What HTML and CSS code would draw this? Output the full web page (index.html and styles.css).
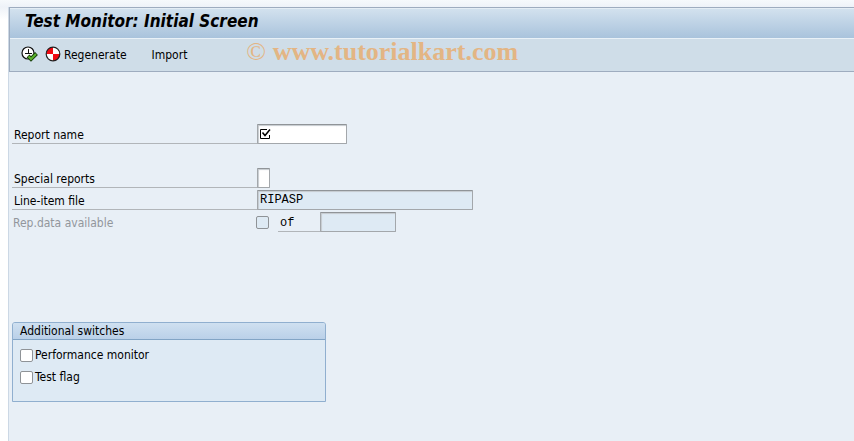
FILE: index.html
```html
<!DOCTYPE html>
<html lang="en">
<head>
<meta charset="utf-8">
<title>Test Monitor: Initial Screen</title>
<link rel="stylesheet" href="styles.css">
</head>
<body>
<main class="window">
  <header class="header">
    <h1 class="title">Test Monitor: Initial Screen</h1>
    <div class="toolbar">
      <button class="tool" type="button" aria-label="Execute">
        <svg width="17" height="17" viewBox="0 0 17 17">
          <circle cx="7" cy="7" r="6" fill="#fff" stroke="#111" stroke-width="1.2"/>
          <path d="M7.500 3v5M4 7.500h7" stroke="#111" fill="none"/>
          <path d="M7 10l3 3 5.500-5.500" stroke="#173d0c" stroke-width="4" fill="none"/>
          <path d="M7.500 10.500l2.500 2.500 5-5" stroke="#5cb52c" stroke-width="2" fill="none"/>
        </svg>
      </button>
      <button class="tool regenerate" type="button">
        <svg width="16" height="16" viewBox="0 0 16 16">
          <circle cx="8" cy="8" r="7" fill="#fff"/>
          <path d="M8 8V1A7 7 0 0 0 1 8zM8 8v7a7 7 0 0 0 7-7z" fill="#f00a12"/>
          <circle cx="8" cy="8" r="6.800" fill="none" stroke="#222" stroke-width="1.200"/>
        </svg>
        <span>Regenerate</span>
      </button>
      <button class="tool import" type="button">Import</button>
      <span class="watermark"><span class="copy">©</span> www.tutorialkart.com</span>
    </div>
  </header>

  <form class="content">
    <div class="row spaced">
      <label class="label" for="report">Report name</label>
      <span class="required">
        <input class="field report" id="report" type="text">
        <svg class="mark" width="12" height="12" viewBox="0 0 12 12" fill="none" stroke="#000">
          <path d="M8 1.500H1.500v9h9V7"/>
          <path d="M3.500 4.500l2.500 3 5-6" stroke-width="1.500"/>
        </svg>
      </span>
    </div>
    <div class="row">
      <label class="label" for="special">Special reports</label>
      <input class="field special" id="special" type="text">
    </div>
    <div class="row">
      <label class="label" for="file">Line-item file</label>
      <input class="field file" id="file" type="text" value="RIPASP" readonly>
    </div>
    <div class="row">
      <label class="label muted" for="available">Rep.data available</label>
      <input class="check" id="available" type="checkbox" disabled>
      <label class="of" for="total">of</label>
      <input class="field total" id="total" type="text" readonly>
    </div>

    <fieldset class="group">
      <legend class="legend">Additional switches</legend>
      <div class="option"><input class="check" id="perf" type="checkbox"><label for="perf">Performance monitor</label></div>
      <div class="option"><input class="check" id="flag" type="checkbox"><label for="flag">Test flag</label></div>
    </fieldset>
  </form>
</main>
</body>
</html>
```
FILE: styles.css
```css
* {
  box-sizing: border-box;
}

body {
  margin: 0;
  min-height: 100vh;
  padding: 7px 0 0 8px;
  display: flex;
  background: linear-gradient(#f6f9fc, #eef2f8 7px, #fff 20px);
  color: #000;
  font-family: Tahoma, "DejaVu Sans Condensed", "DejaVu Sans", sans-serif;
  font-size: 12px;
  line-height: 16px;
}

.window {
  flex: 1;
  border-left: 1px solid #ccd8e5;
  background: #e8eff6;
}

.header {
  border: 1px solid #9eacbf;
  border-right: 0;
  background: #cfdde8;
}

.title {
  margin: 0;
  height: 31px;
  padding: 0 15px;
  border-top: 1px solid #e4edf5;
  border-bottom: 1px solid #e9f1f7;
  background: linear-gradient(#d2e1ee, #a9c3dc);
  font-size: 17px;
  font-style: italic;
  font-weight: bold;
  line-height: 25px;
}

.toolbar {
  display: flex;
  align-items: center;
  height: 32px;
  padding: 0 11px;
}

.tool {
  display: flex;
  align-items: center;
  gap: 3px;
  padding: 0;
  border: 0;
  background: none;
  color: inherit;
  font: inherit;
}

.tool svg {
  margin-bottom: 2px;
}

.regenerate {
  margin-left: 7px;
}

.import {
  margin-left: 25px;
}

.watermark {
  margin: -6px 0 0 59px;
  color: #e3b584;
  font: bold 26px/26px "Liberation Serif", serif;
  white-space: nowrap;
}

.copy {
  font-weight: normal;
}

.content {
  padding: 52px 3px 0;
}

.row {
  display: flex;
  align-items: center;
  height: 20px;
  margin-bottom: 2px;
}

.spaced {
  margin-bottom: 24px;
}

.label {
  width: 245px;
  height: 20px;
  padding: 3px 2px 0;
  border-bottom: 1px solid #b1b5b9;
}

.muted {
  width: 244px;
  padding-left: 1px;
  border-color: transparent;
  color: #92969c;
}

.field {
  height: 20px;
  padding: 0 2px;
  border: 1px solid #a3a7ab;
  border-top-color: #909498;
  border-radius: 1px;
  background: #fff;
  box-shadow: inset 1px 1px 1px #c5cacf;
  color: #000;
  font: 12px "Courier New", "Liberation Mono", monospace;
}

.field:read-only {
  background: #deeaf4;
}

.required {
  position: relative;
  display: flex;
}

.mark {
  position: absolute;
  top: 4px;
  left: 2px;
}

.report {
  width: 90px;
  padding-left: 18px;
}

.special {
  width: 13px;
}

.file {
  width: 216px;
}

.total {
  width: 76px;
}

.of {
  width: 42px;
  height: 20px;
  margin-left: 9px;
  padding: 3px 2px 0;
  border-bottom: 1px solid #b1b5b9;
  font-family: "Courier New", "Liberation Mono", monospace;
}

.check {
  appearance: none;
  width: 13px;
  height: 13px;
  margin: 0;
  border: 1px solid #8f9397;
  border-radius: 2px;
  background: #fff;
}

.check:disabled {
  background: #deeaf4;
}

.group {
  width: 314px;
  min-height: 80px;
  margin: 90px 0 0;
  padding: 0;
  border: 1px solid #90afcf;
  border-radius: 3px 3px 0 0;
  background: #deeaf4;
}

.legend {
  float: left;
  width: 100%;
  height: 17px;
  margin-bottom: 4px;
  padding: 0 7px;
  border-bottom: 1px solid #82a4c5;
  border-radius: 2px 2px 0 0;
  background: linear-gradient(#cfe0f0, #bad0e8);
}

.option {
  clear: both;
  display: flex;
  align-items: center;
  gap: 2px;
  height: 22px;
  padding-left: 7px;
}
```
